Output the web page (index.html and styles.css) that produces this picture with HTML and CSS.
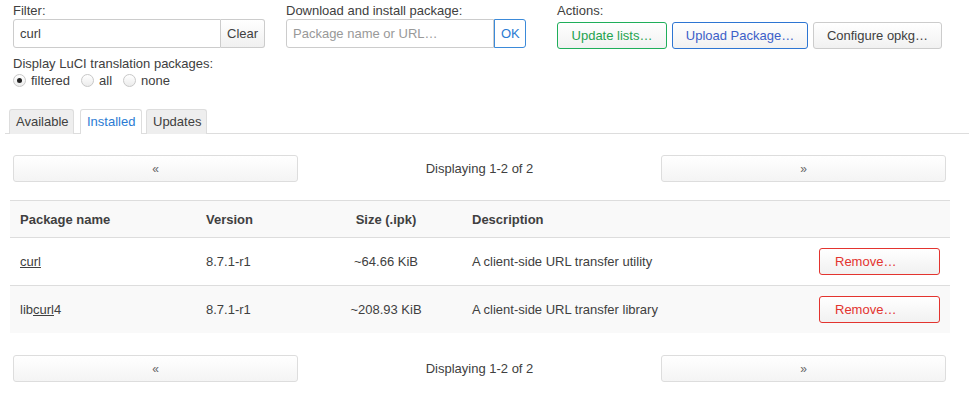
FILE: index.html
```html
<!DOCTYPE html>
<html>
<head>
<meta charset="utf-8">
<link rel="stylesheet" href="styles.css">
</head>
<body>
<div class="controls">
  <div class="col col-filter">
    <label class="lbl">Filter:</label>
    <div class="group">
      <input class="txt txt-filter" type="text" value="curl">
      <button class="addon">Clear</button>
    </div>
    <div class="lbl lbl-lang">Display LuCI translation packages:</div>
    <div class="radios">
      <span class="radio"><span class="dot checked"></span>filtered</span>
      <span class="radio"><span class="dot"></span>all</span>
      <span class="radio"><span class="dot"></span>none</span>
    </div>
  </div>
  <div class="col col-dl">
    <label class="lbl">Download and install package:</label>
    <div class="group">
      <input class="txt txt-dl" type="text" placeholder="Package name or URL…">
      <button class="addon addon-ok">OK</button>
    </div>
  </div>
  <div class="col col-act">
    <label class="lbl">Actions:</label>
    <div class="actions">
      <button class="btn btn-green">Update lists…</button>
      <button class="btn btn-blue">Upload Package…</button>
      <button class="btn btn-neutral">Configure opkg…</button>
    </div>
  </div>
</div>

<ul class="tabs">
  <li class="tab">Available</li>
  <li class="tab active">Installed</li>
  <li class="tab">Updates</li>
</ul>

<div class="pager">
  <button class="pbtn">«</button>
  <div class="ptext">Displaying 1-2 of 2</div>
  <button class="pbtn">»</button>
</div>

<table class="pkgs">
  <colgroup>
    <col class="c-name"><col class="c-ver"><col class="c-size"><col class="c-desc"><col class="c-act">
  </colgroup>
  <thead>
    <tr><th>Package name</th><th>Version</th><th class="center">Size (.ipk)</th><th>Description</th><th></th></tr>
  </thead>
  <tbody>
    <tr class="odd"><td><u>curl</u></td><td>8.7.1-r1</td><td class="center">~64.66 KiB</td><td>A client-side URL transfer utility</td><td class="right"><button class="btn btn-red">Remove…</button></td></tr>
    <tr class="even"><td>lib<u>curl</u>4</td><td>8.7.1-r1</td><td class="center">~208.93 KiB</td><td>A client-side URL transfer library</td><td class="right"><button class="btn btn-red">Remove…</button></td></tr>
  </tbody>
</table>

<div class="pager pager-bottom">
  <button class="pbtn">«</button>
  <div class="ptext">Displaying 1-2 of 2</div>
  <button class="pbtn">»</button>
</div>
</body>
</html>
```

FILE: styles.css
```css
html, body {
  margin: 0;
  padding: 0;
  background: #fff;
}
body {
  font-family: "Liberation Sans", Arial, sans-serif;
  font-size: 13px;
  color: #404040;
}
button, input {
  font-family: "Liberation Sans", Arial, sans-serif;
  font-size: 13px;
}
.controls {
  display: flex;
  padding: 3px 0 0 13px;
  height: 109px;
  box-sizing: border-box;
}
.col { display: flex; flex-direction: column; }
.col-filter { width: 252px; }
.col-dl { width: 240px; margin-left: 21px; }
.col-act { margin-left: 31px; }
.lbl {
  display: block;
  line-height: 16px;
  height: 16px;
}
.group {
  display: flex;
  height: 29px;
}
.txt {
  box-sizing: border-box;
  height: 29px;
  border: 1px solid #ccc;
  border-radius: 3px 0 0 3px;
  padding: 0 6px;
  color: #404040;
  outline: none;
  background: #fff;
}
.txt-filter { width: 208px; }
.txt-dl { width: 208px; }
.txt::placeholder { color: #999; }
.addon {
  box-sizing: border-box;
  height: 29px;
  border: 1px solid #ccc;
  border-left: none;
  border-radius: 0 3px 3px 0;
  background: linear-gradient(#fff, #f0f0f0);
  color: #404040;
  padding: 0 6px;
  width: 44px;
}
.addon-ok {
  width: 32px;
  border: 1px solid #3b8ad9;
  color: #2b7bd3;
  background: #fff;
}
.lbl-lang { margin-top: 8px; }
.radios {
  display: flex;
  align-items: center;
  height: 16px;
}
.radio {
  display: inline-flex;
  align-items: center;
  margin-right: 11px;
}
.dot {
  box-sizing: border-box;
  width: 13px;
  height: 13px;
  border-radius: 50%;
  border: 1px solid #c8c8c8;
  background: linear-gradient(#fff, #ececec);
  margin-right: 5px;
  position: relative;
}
.dot.checked::after {
  content: "";
  position: absolute;
  left: 3px;
  top: 3px;
  width: 5px;
  height: 5px;
  border-radius: 50%;
  background: #222;
}
.actions {
  display: flex;
  gap: 5px;
  margin-top: 3px;
}
.btn {
  box-sizing: border-box;
  height: 27px;
  border-radius: 3px;
  background: linear-gradient(#fff, #f1f1f1);
  border: 1px solid #ccc;
  color: #404040;
  padding: 0;
  white-space: nowrap;
}
.btn-green { width: 110px; border-color: #1fae5a; color: #1fa34f; }
.btn-blue { width: 136px; border-color: #2d75d2; color: #3c5fc8; }
.btn-neutral { width: 129px; }
.btn-red {
  width: 121px;
  border-color: #e3342f;
  color: #e3342f;
  text-align: left;
  padding-left: 15px;
}
.tabs {
  list-style: none;
  margin: 0 0 0 5px;
  padding: 0 0 0 4px;
  display: flex;
  gap: 6px;
  border-bottom: 1px solid #ddd;
  height: 24px;
}
.tab {
  box-sizing: border-box;
  height: 25px;
  line-height: 24px;
  padding: 0 6px;
  background: #eee;
  border: 1px solid #ddd;
  border-bottom: none;
  border-radius: 3px 3px 0 0;
  color: #404040;
}
.tab:nth-child(1) { width: 65px; }
.tab:nth-child(2) { width: 62px; }
.tab:nth-child(3) { width: 61px; margin-left: -2px; }
.tab.active {
  background: #fff;
  color: #2b7bd3;
  height: 25px;
}
.pager {
  display: flex;
  align-items: center;
  padding: 0 23px 0 13px;
  margin-top: 21px;
  height: 27px;
}
.pbtn {
  box-sizing: border-box;
  width: 285px;
  height: 27px;
  border: 1px solid #ddd;
  border-radius: 3px;
  background: linear-gradient(#fff, #f4f4f4);
  color: #666;
  font-size: 12px;
}
.ptext {
  flex: 1;
  text-align: center;
  color: #404040;
}
.pkgs {
  margin: 18px 0 0 10px;
  width: 940px;
  table-layout: fixed;
  border-collapse: collapse;
}
.c-name { width: 186px; }
.c-ver { width: 114px; }
.c-size { width: 152px; }
.c-desc { width: 347px; }
.c-act { width: 141px; }
.pkgs th, .pkgs td {
  padding: 0 10px;
  text-align: left;
  border-top: 1px solid #ddd;
}
.pkgs th {
  height: 36px;
  background: #f9f9f9;
  font-weight: bold;
  color: #404040;
}
.pkgs td { height: 47px; }
.pkgs tr.even td { background: #f9f9f9; }
.pkgs .center { text-align: center; }
.pkgs .right { text-align: right; }
.pkgs u { text-decoration: underline; }
.pager-bottom { margin-top: 22px; }
```
